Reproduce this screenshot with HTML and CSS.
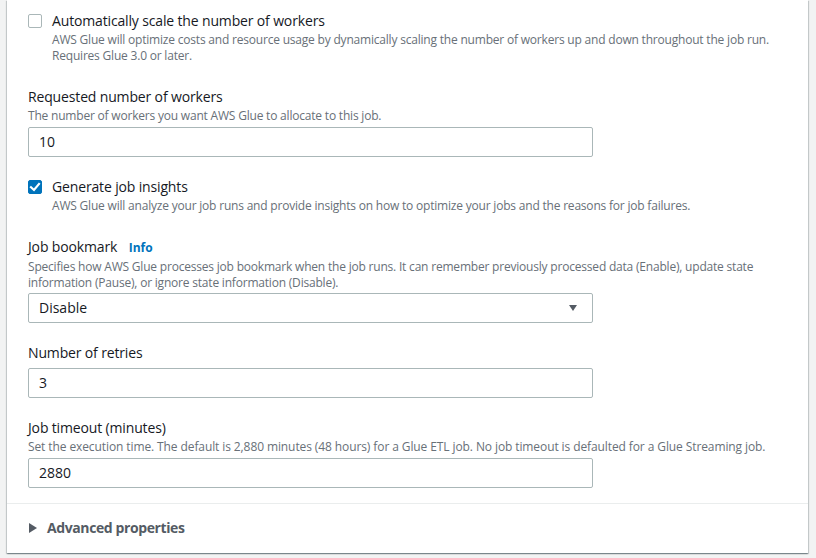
FILE: index.html
```html
<!DOCTYPE html>
<html lang="en">
<head>
<meta charset="utf-8">
<title>Job details</title>
<link rel="stylesheet" href="styles.css">
</head>
<body>
<div class="card">
  <div class="card-body">
    <div class="field field-check">
      <div class="check-row">
        <span class="checkbox"></span>
        <div class="check-text">
          <div class="check-label">Automatically scale the number of workers</div>
          <div class="check-desc">AWS Glue will optimize costs and resource usage by dynamically scaling the number of workers up and down throughout the job run.<br>Requires Glue 3.0 or later.</div>
        </div>
      </div>
    </div>

    <div class="field">
      <div class="label">Requested number of workers</div>
      <div class="desc">The number of workers you want AWS Glue to allocate to this job.</div>
      <div class="input">10</div>
    </div>

    <div class="field field-check">
      <div class="check-row">
        <span class="checkbox checked">
          <svg viewBox="0 0 14 14" width="14" height="14"><polyline points="3,7.2 6,10 11,4" fill="none" stroke="#fff" stroke-width="2.2" stroke-linecap="square"/></svg>
        </span>
        <div class="check-text">
          <div class="check-label">Generate job insights</div>
          <div class="check-desc">AWS Glue will analyze your job runs and provide insights on how to optimize your jobs and the reasons for job failures.</div>
        </div>
      </div>
    </div>

    <div class="field">
      <div class="label">Job bookmark <a class="info">Info</a></div>
      <div class="desc desc-multi">Specifies how AWS Glue processes job bookmark when the job runs. It can remember previously processed data (Enable), update state<br>information (Pause), or ignore state information (Disable).</div>
      <div class="input select">
        <span>Disable</span>
        <svg class="caret" viewBox="0 0 8 6" width="8" height="6"><polygon points="0,0 8,0 4,6" fill="#545b64"/></svg>
      </div>
    </div>

    <div class="field">
      <div class="label label-gap">Number of retries</div>
      <div class="input">3</div>
    </div>

    <div class="field">
      <div class="label">Job timeout (minutes)</div>
      <div class="desc desc-wide">Set the execution time. The default is 2,880 minutes (48 hours) for a Glue ETL job. No job timeout is defaulted for a Glue Streaming job.</div>
      <div class="input">2880</div>
    </div>
  </div>
  <div class="card-footer">
    <svg class="expand" viewBox="0 0 8 10" width="8" height="10"><polygon points="0,0 8,5 0,10" fill="#545b64"/></svg>
    <span class="expand-label">Advanced properties</span>
  </div>
</div>
</body>
</html>
```

FILE: styles.css
```css
* { box-sizing: border-box; }
html, body {
  margin: 0;
  padding: 0;
  background: #f2f3f3;
}
body {
  font-family: "Open Sans", "Liberation Sans", Arial, sans-serif;
  font-size: 14px;
  color: #16191f;
  height: 558px;
  overflow: hidden;
}
.card {
  margin: 0 8px 0 7px;
  background: #fff;
  box-shadow: 0 1px 1px 0 rgba(0, 28, 36, 0.3), 1px 1px 1px 0 rgba(0, 28, 36, 0.15), -1px 1px 1px 0 rgba(0, 28, 36, 0.15);
}
.card-body {
  padding: 10px 20px 15px 21px;
  display: flex;
  flex-direction: column;
  gap: 19px;
}
.field {
  display: flex;
  flex-direction: column;
}
.field-check {
  padding-bottom: 3px;
}
.check-row {
  display: flex;
  gap: 10px;
  align-items: flex-start;
}
.checkbox {
  width: 14px;
  height: 14px;
  margin-top: 4px;
  flex: none;
  border: 1px solid #aab7b8;
  border-radius: 2px;
  background: #fff;
  display: block;
}
.checkbox.checked {
  background: #0073bb;
  border-color: #0073bb;
}
.checkbox svg {
  display: block;
  margin: -1px;
}
.check-label {
  line-height: 22px;
  letter-spacing: -0.15px;
}
.check-desc {
  font-size: 12px;
  line-height: 16px;
  color: #687078;
  letter-spacing: -0.2px;
  white-space: nowrap;
}
.label {
  line-height: 22px;
  letter-spacing: -0.15px;
}
.label-gap {
  margin-bottom: 4px;
}
.info {
  font-size: 12px;
  font-weight: 700;
  color: #0073bb;
  margin-left: 8px;
  letter-spacing: 0;
}
.desc {
  font-size: 12px;
  line-height: 16px;
  color: #687078;
  margin-bottom: 3px;
  letter-spacing: -0.2px;
  white-space: nowrap;
}
.desc-multi {
  margin-bottom: 2px;
}
.desc-wide {
  letter-spacing: -0.1px;
}
.input {
  width: 565px;
  height: 30px;
  border: 1px solid #aab7b8;
  border-radius: 2px;
  padding: 0 10px;
  line-height: 28px;
  font-size: 14px;
  color: #16191f;
}
.select {
  display: flex;
  align-items: center;
  justify-content: space-between;
  padding-right: 15px;
}
.caret {
  display: block;
}
.card-footer {
  border-top: 1px solid #eaeded;
  padding: 13px 20px 14px 22px;
  display: flex;
  align-items: center;
  gap: 10px;
  height: 50px;
}
.expand {
  display: block;
}
.expand-label {
  font-weight: 700;
  color: #545b64;
  line-height: 22px;
  letter-spacing: -0.4px;
}
```
